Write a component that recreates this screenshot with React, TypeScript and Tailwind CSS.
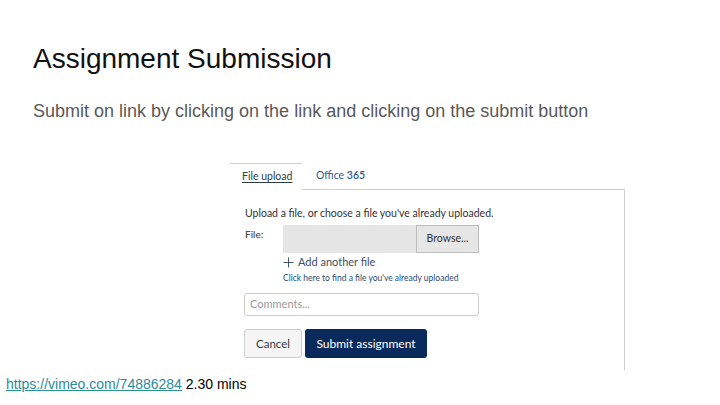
import React from "react";

export default function App() {
  return (
    <div className="w-[720px] h-[405px] bg-white flex flex-col overflow-hidden font-['Liberation_Sans',Arial,sans-serif]">
      <div className="ml-[33px] mt-[43px] text-[28px] leading-[32px] text-[#111]">Assignment Submission</div>
      <div className="ml-[33px] mt-[25px] text-[18px] leading-[22px] text-[#595959]">
        Submit on link by clicking on the link and clicking on the submit button
      </div>

      <div className="ml-[230px] mt-[41px] w-[395px] h-[207px] flex flex-col font-['Lato','Noto_Sans',sans-serif]">
        <div className="flex h-[27px]">
          <div className="w-[72px] border-t border-[#d0d0d0] pl-[12px] pt-[5px] text-[10.5px] leading-[14px] text-[#2d3b45]">
            <span className="underline underline-offset-2">File upload</span>
          </div>
          <div className="flex-1 border-b border-[#cfcfcf] pl-[14px] pt-[5px] text-[10.5px] leading-[14px] text-[#34598a]">
            Office <span className="font-semibold">365</span>
          </div>
        </div>
        <div className="flex-1 border-r border-[#cfcfcf] pl-[14px] pt-[16px] flex flex-col">
          <div className="ml-[1px] text-[10.5px] leading-[14px] text-[#333]">Upload a file, or choose a file you've already uploaded.</div>
          <div className="flex mt-[5px] ml-[1px]">
            <div className="w-[38px] text-[10px] leading-[14px] text-[#333] pt-[2px]">File:</div>
            <div className="w-[133px] h-[28px] bg-[#e5e5e5]"></div>
            <div className="w-[63px] h-[28px] bg-[#e6e6e6] border border-[#bdbdbd] flex items-center justify-center text-[10.5px] text-[#333]">
              Browse...
            </div>
          </div>
          <div className="ml-[39px] flex items-center h-[18px]">
            <svg width="11" height="11" viewBox="0 0 11 11" className="mr-[4px]">
              <path d="M5.5 0.5V10.5M0.5 5.5H10.5" stroke="#44546a" strokeWidth="1" />
            </svg>
            <span className="text-[11px] leading-[14px] text-[#3e4f66]">Add another file</span>
          </div>
          <div className="ml-[39px] text-[8.5px] leading-[12px] text-[#2c4a72] mt-[1px]">
            Click here to find a file you've already uploaded
          </div>
          <div className="mt-[9px] w-[235px] h-[23px] border border-[#cccccc] rounded-[3px] flex items-center pl-[5px] text-[11px] text-[#9a9a9a]">
            Comments...
          </div>
          <div className="flex mt-[13px] gap-[3px]">
            <div className="w-[58px] h-[29px] bg-[#f5f5f5] border border-[#c7cdd1] rounded-[3px] flex items-center justify-center text-[11.5px] text-[#2d3b45]">
              Cancel
            </div>
            <div className="w-[122px] h-[29px] bg-[#0b2a5c] rounded-[3px] flex items-center justify-center text-[12px] text-white">
              Submit assignment
            </div>
          </div>
        </div>
      </div>

      <div className="ml-[6px] mt-[6px] text-[14px] leading-[16px] text-black">
        <a href="https://vimeo.com/74886284" className="text-[#2b8c9c] underline">https://vimeo.com/74886284</a> 2.30 mins
      </div>
    </div>
  );
}
